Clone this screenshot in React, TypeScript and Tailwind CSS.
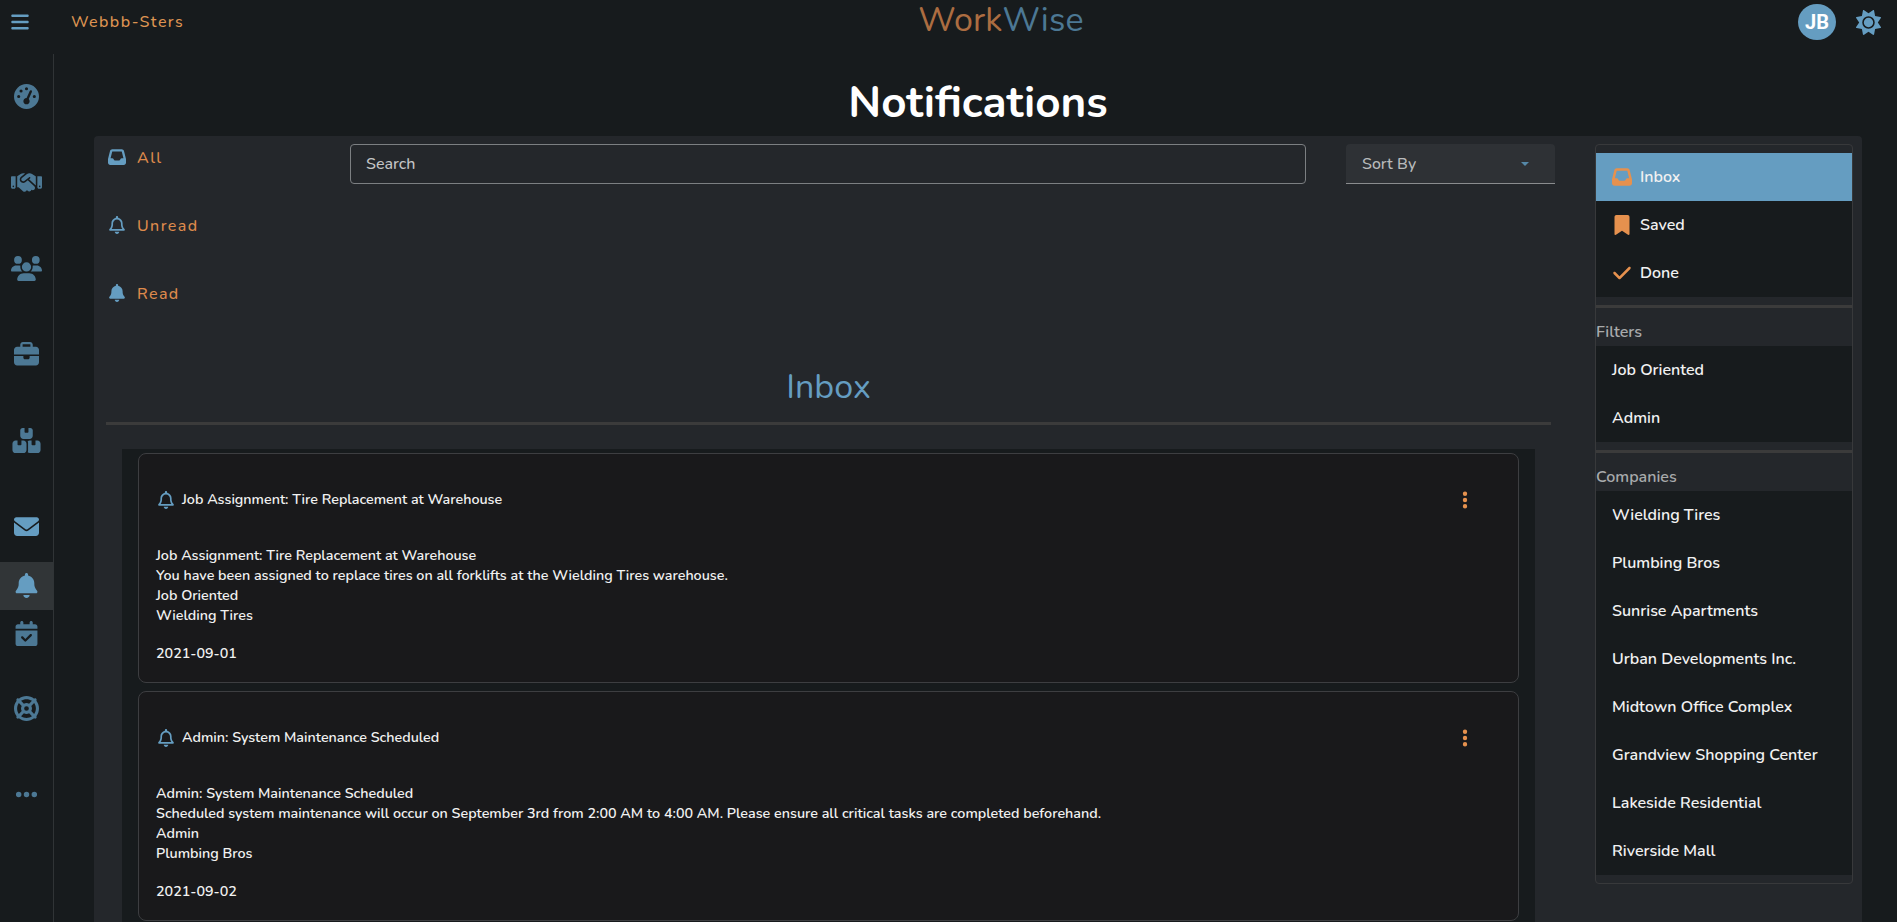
import type { ReactNode } from 'react';
import type { IconType } from 'react-icons';
import {
  FaBars, FaBell, FaBookmark, FaBoxesStacked, FaBriefcase, FaCalendarCheck, FaCheck,
  FaEllipsis, FaEllipsisVertical, FaEnvelope, FaGaugeHigh, FaHandshake, FaInbox,
  FaLifeRing, FaRegBell, FaSun, FaUsers,
} from 'react-icons/fa6';

const navItems: { icon: IconType; box: string }[] = [
  { icon: FaGaugeHigh, box: 'text-[#4c7894] mb-[38px]' },
  { icon: FaHandshake, box: 'text-[#4c7894] mb-[38px]' },
  { icon: FaUsers, box: 'text-[#4c7894] mb-[38px]' },
  { icon: FaBriefcase, box: 'text-[#4c7894] mb-[38px]' },
  { icon: FaBoxesStacked, box: 'text-[#4c7894] mb-[38px]' },
  { icon: FaEnvelope, box: 'text-[#659dc1] mb-[12px]' },
  { icon: FaBell, box: 'text-[#659dc1] bg-[#313537] pb-[1px]' },
  { icon: FaCalendarCheck, box: 'text-[#4c7894] mb-[26px] pb-[1px]' },
  { icon: FaLifeRing, box: 'text-[#4c7894] mb-[38px]' },
  { icon: FaEllipsis, box: 'text-[#4c7894]' },
];

const tabs: { icon: IconType; label: string }[] = [
  { icon: FaInbox, label: 'All' },
  { icon: FaRegBell, label: 'Unread' },
  { icon: FaBell, label: 'Read' },
];

const folders: { icon: IconType; label: string; bg: string }[] = [
  { icon: FaInbox, label: 'Inbox', bg: 'bg-[#659dc1]' },
  { icon: FaBookmark, label: 'Saved', bg: 'bg-[#171b1d]' },
  { icon: FaCheck, label: 'Done', bg: 'bg-[#171b1d]' },
];

const filters = ['Job Oriented', 'Admin'];

const companies = [
  'Wielding Tires', 'Plumbing Bros', 'Sunrise Apartments', 'Urban Developments Inc.',
  'Midtown Office Complex', 'Grandview Shopping Center', 'Lakeside Residential', 'Riverside Mall',
];

const notifications = [
  {
    title: 'Job Assignment: Tire Replacement at Warehouse',
    message: 'You have been assigned to replace tires on all forklifts at the Wielding Tires warehouse.',
    type: 'Job Oriented',
    company: 'Wielding Tires',
    date: '2021-09-01',
  },
  {
    title: 'Admin: System Maintenance Scheduled',
    message:
      'Scheduled system maintenance will occur on September 3rd from 2:00 AM to 4:00 AM. Please ensure all critical tasks are completed beforehand.',
    type: 'Admin',
    company: 'Plumbing Bros',
    date: '2021-09-02',
  },
];

function Header() {
  return (
    <header className="flex h-[54px] shrink-0 items-start justify-between pr-[16px] pl-[11px]">
      <div className="mt-[4px] flex h-[36px] w-[300px] items-center text-[#659dc1]">
        <FaBars className="w-[18px] text-[20px]" />
        <span className="ml-[42px] text-base font-medium tracking-[1.4px] text-[#dd9452]">Webbb-Sters</span>
      </div>
      <h4 className="ml-[110px] h-[40px] text-[34px] leading-[40px] tracking-[0.15px]">
        <span className="text-[#ac6d41]">Work</span>
        <span className="text-[#4c7894]">Wise</span>
      </h4>
      <div className="mt-[4px] flex w-[300px] items-center justify-end gap-[20px]">
        <div className="flex h-[36px] w-[38px] items-center justify-center rounded-[50%] bg-[#659dc1] font-['Roboto',sans-serif] text-[20px] font-bold text-white">
          JB
        </div>
        <FaSun className="text-[25px] text-[#659dc1]" />
      </div>
    </header>
  );
}

function NavRail() {
  return (
    <nav className="flex w-[54px] shrink-0 flex-col border-r border-[#303436] pt-[18px]">
      {navItems.map(({ icon: Icon, box }, i) => (
        <button key={i} className={`flex h-[48px] shrink-0 items-center justify-center ${box}`}>
          <Icon className="h-[25px] w-[31px]" />
        </button>
      ))}
    </nav>
  );
}

function Toolbar() {
  return (
    <div className="flex items-start">
      <div className="flex w-[256px] flex-col gap-[44px] pt-[1px] pl-[14px]">
        {tabs.map(({ icon: Icon, label }) => (
          <button key={label} className="flex h-[24px] items-center text-[#dd8a4c]">
            <Icon className="w-[18px] text-[18px] text-[#659dc1]" />
            <span className="ml-[11px] pt-[2px] text-base font-medium tracking-[1.4px]">{label}</span>
          </button>
        ))}
      </div>
      <div className="mr-[40px] flex h-[40px] flex-1 items-center rounded border border-[#7c7f82] pl-[15px] font-medium text-[#c3c4c5]">
        Search
      </div>
      <div className="flex h-[40px] w-[209px] items-center justify-between rounded-t border-b border-[#8a8c8e] bg-[#2e3135] pr-[26px] pl-[16px] font-medium text-[#b8babb]">
        Sort By
        <svg viewBox="0 0 8 4" className="h-[4px] w-[8px] text-[#5588a8]">
          <path d="M0 0l4 4 4-4z" fill="currentColor" />
        </svg>
      </div>
    </div>
  );
}

function NotificationCard({ item }: { item: (typeof notifications)[number] }) {
  return (
    <article className="h-[230px] shrink-0 rounded-[8px] border border-[#3d3e41] bg-[#19191b] px-[17px] text-[14.3px] leading-[20px] font-semibold text-[#f1f1f1]">
      <div className="flex h-[92px] items-center">
        <FaRegBell className="ml-[0.5px] h-[18px] w-[18px] text-[#659dc1]" />
        <span className="ml-[7.5px]">{item.title}</span>
        <FaEllipsisVertical className="mr-[26.5px] mb-[1px] ml-auto h-[20px] w-[20px] text-[#e6914e]" />
      </div>
      <p>{item.title}</p>
      <p>{item.message}</p>
      <p>{item.type}</p>
      <p>{item.company}</p>
      <p className="mt-[18px]">{item.date}</p>
    </article>
  );
}

function MenuRow({ label, icon: Icon, bg = 'bg-[#171b1d]' }: { label: string; icon?: IconType; bg?: string }) {
  return (
    <li className={`flex h-[48px] items-center px-[16px] text-[#f1f1f1] ${bg}`}>
      {Icon && <Icon className="mr-[8px] w-[20px] text-[20px] text-[#e6914e]" />}
      {label}
    </li>
  );
}

function MenuSection({ title, children }: { title: string; children: ReactNode }) {
  return (
    <section>
      <div className="mt-[8px] h-[3px] bg-[#3b3b3b]" />
      <h6 className="h-[38px] pt-[12px] text-[#a8aaab]">{title}</h6>
      <ul>{children}</ul>
    </section>
  );
}

function SideMenu() {
  return (
    <aside className="h-[740px] w-[258px] shrink-0 rounded border border-[#38393b] py-[8px] text-base font-semibold">
      <ul>
        {folders.map((f) => (
          <MenuRow key={f.label} {...f} />
        ))}
      </ul>
      <MenuSection title="Filters">
        {filters.map((f) => (
          <MenuRow key={f} label={f} />
        ))}
      </MenuSection>
      <MenuSection title="Companies">
        {companies.map((c) => (
          <MenuRow key={c} label={c} />
        ))}
      </MenuSection>
    </aside>
  );
}

export default function App() {
  return (
    <div className="flex h-[922px] w-full flex-col overflow-hidden bg-[#171b1d] font-['Nunito','Lato',sans-serif] text-white">
      <Header />
      <div className="flex min-h-0 flex-1">
        <NavRail />
        <main className="flex min-w-0 flex-1 flex-col pr-[35px] pl-[40px]">
          <h1 className="h-[82px] shrink-0 pt-[16px] text-center text-[44px] leading-[66px] font-bold">Notifications</h1>
          <div className="flex min-h-0 flex-1 items-start rounded-t bg-[#24272b] pt-[8px] pr-[9px]">
            <div className="flex min-w-0 flex-1 flex-col pr-[40px]">
              <Toolbar />
              <div className="mt-[61px] mr-[4px] ml-[12px] flex flex-col">
                <h2 className="text-center text-[34px] leading-[42px] tracking-[0.1px] text-[#659dc1]">Inbox</h2>
                <div className="mt-[14px] h-[3px] bg-[#3b3b3b]" />
                <div className="mx-[16px] mt-[24px] flex flex-col gap-[8px] bg-[#171b1d] px-[16px] pt-[4px] pb-[4px]">
                  {notifications.map((n) => (
                    <NotificationCard key={n.date} item={n} />
                  ))}
                </div>
              </div>
            </div>
            <SideMenu />
          </div>
        </main>
      </div>
    </div>
  );
}
